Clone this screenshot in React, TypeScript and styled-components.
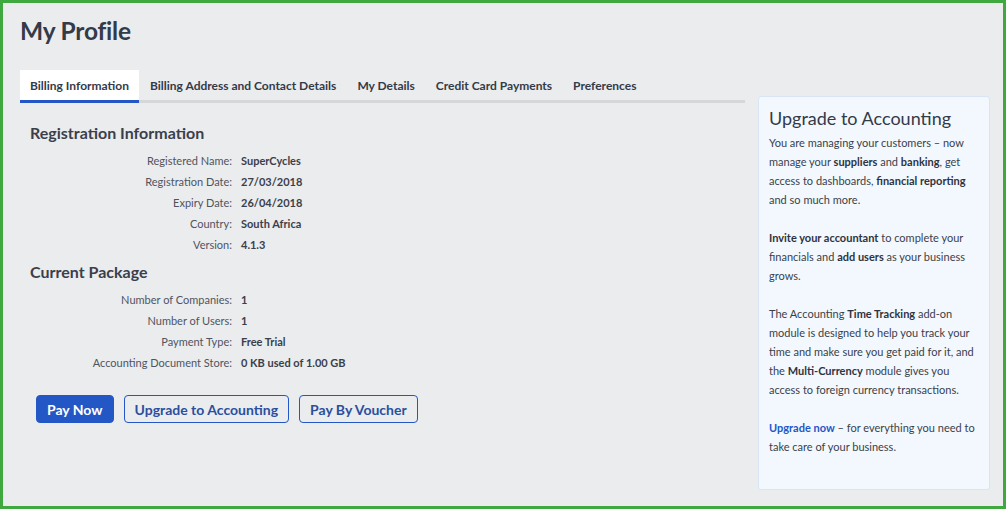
import React, { useState } from 'react'
import styled, { createGlobalStyle } from 'styled-components'

const GlobalStyle = createGlobalStyle`
	html, body {
		margin: 0;
		padding: 0;
	}
	body {
		font-family: Lato, 'Open Sans', Arial, sans-serif;
		color: #333a45;
		background: #ebecee;
	}
	* {
		box-sizing: border-box;
	}
`

const tabs = [
	'Billing Information',
	'Billing Address and Contact Details',
	'My Details',
	'Credit Card Payments',
	'Preferences',
]

const registration = [
	['Registered Name:', 'SuperCycles'],
	['Registration Date:', '27/03/2018'],
	['Expiry Date:', '26/04/2018'],
	['Country:', 'South Africa'],
	['Version:', '4.1.3'],
]

const currentPackage = [
	['Number of Companies:', '1'],
	['Number of Users:', '1'],
	['Payment Type:', 'Free Trial'],
	['Accounting Document Store:', '0 KB used of 1.00 GB'],
]

function InfoTable({ rows }: { rows: string[][] }) {
	return (
		<InfoGrid>
			{rows.map(([label, value]) => (
				<React.Fragment key={label}>
					<Label>{label}</Label>
					<Value>{value}</Value>
				</React.Fragment>
			))}
		</InfoGrid>
	)
}

export default function App() {
	const [active, setActive] = useState(0)

	return (
		<>
			<GlobalStyle />
			<Frame>
				<Title>My Profile</Title>
				<Columns>
					<Main>
						<TabBar>
							{tabs.map((t, i) => (
								<Tab key={t} $active={i === active} onClick={() => setActive(i)}>
									{t}
								</Tab>
							))}
						</TabBar>
						<Section>
							<SectionTitle>Registration Information</SectionTitle>
							<InfoTable rows={registration} />
							<SectionTitle>Current Package</SectionTitle>
							<InfoTable rows={currentPackage} />
							<Actions>
								<Button $primary>Pay Now</Button>
								<Button>Upgrade to Accounting</Button>
								<Button>Pay By Voucher</Button>
							</Actions>
						</Section>
					</Main>
					<Aside>
						<AsideTitle>Upgrade to Accounting</AsideTitle>
						<Para>
							You are managing your customers – now manage your <b>suppliers</b> and{' '}
							<b>banking</b>, get access to dashboards, <b>financial reporting</b> and
							so much more.
						</Para>
						<Para>
							<b>Invite your accountant</b> to complete your financials and{' '}
							<b>add users</b> as your business grows.
						</Para>
						<Para>
							The Accounting <b>Time Tracking</b> add-on module is designed to help you
							track your time and make sure you get paid for it, and the{' '}
							<b>Multi-Currency</b> module gives you access to foreign currency
							transactions.
						</Para>
						<Para>
							<Link href='#'>Upgrade now</Link> – for everything you need to take care
							of your business.
						</Para>
					</Aside>
				</Columns>
			</Frame>
		</>
	)
}

const Frame = styled.div`
	height: 509px;
	border: 3px solid #3fa940;
	padding: 14px 13px 15px 17px;
	display: flex;
	flex-direction: column;
	overflow: hidden;
`

const Title = styled.h1`
	margin: 0;
	font-size: 24.5px;
	font-weight: 700;
	line-height: 28px;
	color: #333a48;
	letter-spacing: -0.2px;
`

const Columns = styled.div`
	display: flex;
	gap: 13px;
	margin-top: 25px;
	flex: 1;
`

const Main = styled.div`
	width: 725px;
	display: flex;
	flex-direction: column;
`

const TabBar = styled.div`
	display: flex;
	border-bottom: 3px solid #d6d7da;
`

const Tab = styled.div<{ $active?: boolean }>`
	padding: 0 10px;
	height: 33px;
	line-height: 31px;
	font-size: 12px;
	font-weight: 700;
	color: #333a48;
	cursor: pointer;
	margin-bottom: -3px;
	margin-right: 1px;
	background: ${(p) => (p.$active ? '#ffffff' : 'transparent')};
	border-bottom: 3px solid ${(p) => (p.$active ? '#2257c5' : 'transparent')};
`

const Section = styled.div`
	padding: 20px 10px 0;
`

const SectionTitle = styled.h2`
	margin: 0 0 7px;
	font-size: 16px;
	font-weight: 700;
	line-height: 20px;
	color: #3a3f4b;
`

const InfoGrid = styled.div`
	display: grid;
	grid-template-columns: 202px 1fr;
	column-gap: 9px;
	margin-bottom: 7px;
	font-size: 11px;
	line-height: 21px;
`

const Label = styled.div`
	text-align: right;
	color: #4f5461;
`

const Value = styled.div`
	font-weight: 700;
	color: #3a3f4b;
`

const Actions = styled.div`
	display: flex;
	gap: 10px;
	margin-top: 22px;
	padding-left: 6px;
`

const Button = styled.button<{ $primary?: boolean }>`
	height: 28px;
	padding: 0 10px;
	border-radius: 4px;
	font-family: inherit;
	font-size: 14px;
	font-weight: 700;
	cursor: pointer;
	border: 1px solid #2257c5;
	background: ${(p) => (p.$primary ? '#2257c5' : 'transparent')};
	color: ${(p) => (p.$primary ? '#ffffff' : '#2a4f9e')};
`

const Aside = styled.div`
	width: 232px;
	margin-top: 26px;
	margin-bottom: 1px;
	background: #f3f8fe;
	border: 1px solid #d9e5f4;
	border-radius: 3px;
	padding: 9px 10px;
	font-size: 11px;
	line-height: 19px;
	color: #3a3f4b;
`

const AsideTitle = styled.h3`
	margin: 0 0 3px;
	font-size: 18px;
	font-weight: 400;
	line-height: 24px;
	color: #333a48;
`

const Para = styled.p`
	margin: 0 0 19px;

	b {
		font-weight: 700;
		color: #2e3340;
	}
`

const Link = styled.a`
	color: #2257c5;
	text-decoration: none;
	font-weight: 700;
`
